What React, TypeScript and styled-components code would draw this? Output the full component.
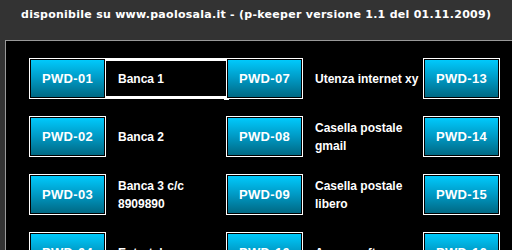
import React from 'react';
import styled, { createGlobalStyle } from 'styled-components';

const GlobalStyle = createGlobalStyle`
  html, body {
    margin: 0;
    padding: 0;
    background: #333333;
    overflow: hidden;
  }
`;

const Page = styled.div`
  width: 512px;
  height: 250px;
  overflow: hidden;
  background: #333333;
`;

const Header = styled.div`
  height: 40px;
  box-sizing: border-box;
  padding: 8px 0 0 21px;
  color: #ffffff;
  font-family: 'DejaVu Sans', 'Liberation Sans', sans-serif;
  font-weight: bold;
  font-size: 11px;
  line-height: 13px;
  letter-spacing: 0.27px;
  white-space: nowrap;
`;

const Panel = styled.div`
  margin-left: 5px;
  width: 640px;
  height: 400px;
  box-sizing: border-box;
  border: 1px solid #999999;
  background: #000000;
  padding: 17px 0 0 23px;
`;

const Grid = styled.div`
  display: grid;
  grid-template-columns: repeat(3, 77px 120px);
  grid-auto-rows: 41px;
  row-gap: 17px;
`;

const PwdButton = styled.button`
  box-sizing: border-box;
  width: 77px;
  height: 41px;
  margin: 0;
  padding: 1px;
  border: 1px solid #ffffff;
  background-color: #000000;
  background-image: linear-gradient(#00ccff, #0099c4 50%, #006680);
  background-clip: content-box;
  color: #ffffff;
  font-family: 'Liberation Sans', Arial, sans-serif;
  font-weight: bold;
  font-size: 13px;
  letter-spacing: 0.3px;
  display: flex;
  align-items: center;
  justify-content: center;
  cursor: pointer;
`;

const Label = styled.div<{ $active?: boolean }>`
  position: relative;
  box-sizing: border-box;
  height: 41px;
  padding-left: 12px;
  display: flex;
  flex-direction: column;
  justify-content: center;
  color: #ffffff;
  font-family: 'Liberation Sans', Arial, sans-serif;
  font-weight: bold;
  font-size: 12px;
  line-height: 18px;
  white-space: nowrap;
  border-top: 3px solid ${(p) => (p.$active ? '#ffffff' : 'transparent')};
  border-bottom: 3px solid ${(p) => (p.$active ? '#ffffff' : 'transparent')};

  &::after {
    content: '';
    display: ${(p) => (p.$active ? 'block' : 'none')};
    position: absolute;
    right: -3px;
    bottom: -4px;
    width: 4px;
    height: 3px;
    border-left: 1px solid #ffffff;
    border-bottom: 1px solid #ffffff;
  }
`;

const labels: string[][][] = [
  [['Banca 1'], ['Banca 2'], ['Banca 3 c/c', '8909890'], ['Entratel']],
  [['Utenza internet xy'], ['Casella postale', 'gmail'], ['Casella postale', 'libero'], ['Accesso ftp']],
  [[], [], [], []],
];

const pad = (n: number) => (n < 10 ? `0${n}` : `${n}`);

export default function App() {
  const rows = [0, 1, 2, 3];
  return (
    <Page>
      <GlobalStyle />
      <Header>disponibile su www.paolosala.it - (p-keeper versione 1.1 del 01.11.2009)</Header>
      <Panel>
        <Grid>
          {rows.map((r) =>
            labels.map((col, c) => (
              <React.Fragment key={`${r}-${c}`}>
                <PwdButton>PWD-{pad(c * 6 + r + 1)}</PwdButton>
                <Label $active={r === 0 && c === 0}>
                  {col[r].map((line) => (
                    <span key={line}>{line}</span>
                  ))}
                </Label>
              </React.Fragment>
            ))
          )}
        </Grid>
      </Panel>
    </Page>
  );
}
